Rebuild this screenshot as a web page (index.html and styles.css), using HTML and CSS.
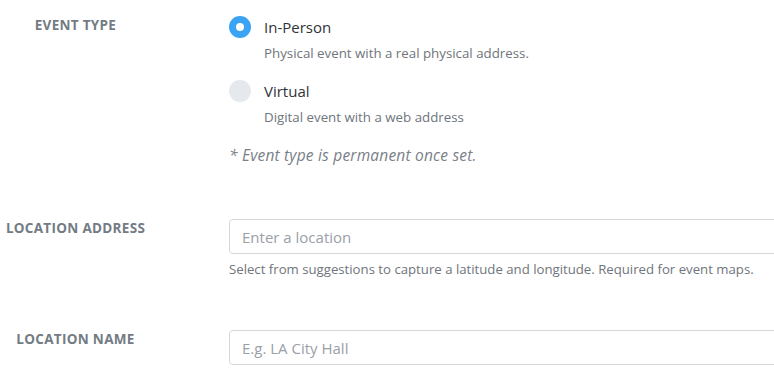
FILE: index.html
```html
<!DOCTYPE html>
<html lang="en">
<head>
    <meta charset="UTF-8">
    <meta name="viewport" content="width=device-width, initial-scale=1.0">
    <title>Event Location</title>
    <link rel="stylesheet" href="styles.css">
</head>
<body>
    <div class="form">
        <div class="form-row first">
            <div class="field-label">EVENT TYPE</div>
            <div class="field">
                <div class="option">
                    <span class="radio checked"></span>
                    <span class="option-title">In-Person</span>
                </div>
                <div class="option-desc">Physical event with a real physical address.</div>

                <div class="option second">
                    <span class="radio"></span>
                    <span class="option-title">Virtual</span>
                </div>
                <div class="option-desc">Digital event with a web address</div>

                <div class="note">* Event type is permanent once set.</div>
            </div>
        </div>

        <div class="form-row">
            <div class="field-label">LOCATION ADDRESS</div>
            <div class="field">
                <input class="text-input" type="text" placeholder="Enter a location">
                <div class="help">Select from suggestions to capture a latitude and longitude. Required for event maps.</div>
            </div>
        </div>

        <div class="form-row">
            <div class="field-label">LOCATION NAME</div>
            <div class="field">
                <input class="text-input" type="text" placeholder="E.g. LA City Hall">
            </div>
        </div>
    </div>
</body>
</html>
```

FILE: styles.css
```css
* {
    margin: 0;
    padding: 0;
    box-sizing: border-box;
}

body {
    font-family: 'Open Sans', 'Lato', sans-serif;
    background: #ffffff;
    color: #374151;
    overflow: hidden;
}

.form {
    padding-top: 16px;
    width: 1000px;
}

.form-row {
    display: grid;
    grid-template-columns: 151px 1fr;
    column-gap: 78px;
    margin-top: 54px;
}

.form-row.first {
    margin-top: 0;
}

.form-row + .form-row + .form-row {
    margin-top: 52px;
}

.field-label {
    text-align: center;
    font-weight: 700;
    font-size: 13.5px;
    letter-spacing: 0.3px;
    line-height: 16px;
    padding-top: 1px;
    color: #737b84;
}

.option {
    display: flex;
    align-items: center;
    height: 22px;
}

.option.second {
    margin-top: 18px;
}

.radio {
    width: 22px;
    height: 22px;
    border-radius: 50%;
    background: #e5e8ec;
    margin-right: 13px;
    flex-shrink: 0;
}

.radio.checked {
    background: #fff;
    border: 7px solid #3aa3f4;
}

.option-title {
    font-size: 15px;
    color: #2f3338;
}

.option-desc {
    margin-top: 6px;
    margin-left: 35px;
    font-size: 13.3px;
    line-height: 18px;
    color: #6f757c;
}

.note {
    margin-top: 19px;
    font-size: 15.5px;
    letter-spacing: 0.2px;
    line-height: 20px;
    font-style: italic;
    color: #7a8088;
}

.text-input {
    display: block;
    width: 700px;
    height: 35px;
    border: 1px solid #d4d8dd;
    border-radius: 4px;
    padding: 0 12px;
    font-family: inherit;
    font-size: 15px;
    color: #374151;
    outline: none;
}

.text-input::placeholder {
    color: #9aa0a7;
}

.help {
    margin-top: 6px;
    font-size: 13.2px;
    line-height: 18px;
    color: #6f757c;
}
```
